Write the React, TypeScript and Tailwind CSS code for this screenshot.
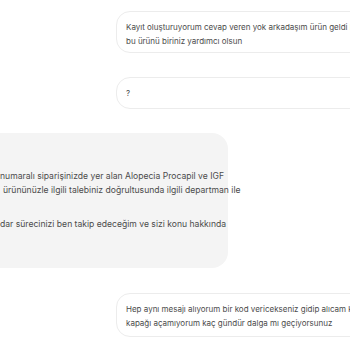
import React from 'react';

function UserBubble({ lines, className }: { lines: string[]; className?: string }) {
  return (
    <div
      className={`ml-[116px] w-[262px] shrink-0 rounded-[14px] border border-[#ececec] bg-white px-[9px] text-[8px] leading-[14px] text-[#4b4b4b] ${className ?? ''}`}
    >
      {lines.map((l, i) => (
        <div key={i} className="whitespace-nowrap">{l}</div>
      ))}
    </div>
  );
}

export default function App() {
  return (
    <div
      className="flex h-[350px] w-[350px] flex-col overflow-hidden bg-white"
      style={{ fontFamily: 'Inter, "Noto Sans", sans-serif' }}
    >
      <UserBubble
        className="mt-[11px] pt-[8px] pb-[4px]"
        lines={[
          'Kayıt oluşturuyorum cevap veren yok arkadaşım ürün geldi kapağı açılmıyor',
          'bu ürünü biriniz yardımcı olsun',
        ]}
      />
      <UserBubble className="mt-[24px] py-[8px]" lines={['?']} />

      <div className="ml-[-130px] mt-[24px] h-[135px] w-[358px] shrink-0 rounded-[16px] bg-[#f4f4f4] pl-[130px] pt-[36px] text-[8.6px] leading-[14px] text-[#4b4b4b]">
        <div className="whitespace-nowrap">numaralı siparişinizde yer alan Alopecia Procapil ve IGF</div>
        <div className="whitespace-nowrap pl-[3px]">ürününüzle ilgili talebiniz doğrultusunda ilgili departman ile</div>
        <div className="mt-[20px] whitespace-nowrap">dar sürecinizi ben takip edeceğim ve sizi konu hakkında</div>
      </div>

      <UserBubble
        className="mt-[25px] pt-[8px] pb-[6px]"
        lines={[
          'Hep aynı mesajı alıyorum bir kod vericekseniz gidip alıcam kargodan',
          'kapağı açamıyorum kaç gündür dalga mı geçiyorsunuz',
        ]}
      />
    </div>
  );
}
